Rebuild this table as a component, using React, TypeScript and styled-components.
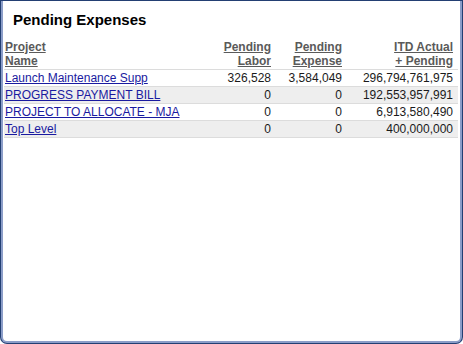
import React from 'react';
import styled, { createGlobalStyle } from 'styled-components';

const GlobalStyle = createGlobalStyle`
  html, body {
    margin: 0;
    padding: 0;
    background: #ffffff;
  }
  body {
    font-family: "Liberation Sans", Arial, sans-serif;
  }
`;

const Frame = styled.div`
  box-sizing: border-box;
  width: 463px;
  height: 344px;
  background: #233f73;
  padding: 1px;
  border-radius: 0 0 7px 7px;
  display: flex;
`;

const Panel = styled.div`
  box-sizing: border-box;
  flex: 1;
  min-width: 0;
  background: #ffffff;
  border: 2px solid #8b9dc8;
  border-top: none;
  border-radius: 0 0 6px 6px;
  display: flex;
  flex-direction: column;
  padding: 0 1px;
`;

const Title = styled.h1`
  margin: 0;
  padding: 10px 0 0 9px;
  height: 28px;
  font-size: 15px;
  font-weight: bold;
  color: #000000;
  line-height: 18px;
`;

const Table = styled.table`
  width: 454px;
  border-collapse: collapse;
  table-layout: fixed;
  font-size: 12px;
`;

const Col = styled.col<{ $width: number }>`
  width: ${(p) => p.$width}px;
`;

const HeadCell = styled.th<{ $align?: 'left' | 'right' }>`
  text-align: ${(p) => p.$align ?? 'right'};
  vertical-align: bottom;
  font-weight: bold;
  color: #5a5a5a;
  text-decoration: underline;
  line-height: 14px;
  padding: 1px ${(p) => (p.$align === 'left' ? 0 : 3)}px 1px 1px;
  white-space: nowrap;
  &:last-child {
    padding-right: 5px;
  }
`;

const Row = styled.tr<{ $shade: boolean }>`
  background: ${(p) => (p.$shade ? '#eeeeee' : '#ffffff')};
  border-top: 1px solid #dcdcdc;
  &:last-child {
    border-bottom: 1px solid #dcdcdc;
  }
`;

const Cell = styled.td<{ $align?: 'left' | 'right' }>`
  text-align: ${(p) => p.$align ?? 'right'};
  color: #1a1a1a;
  line-height: 14px;
  padding: 1px ${(p) => (p.$align === 'left' ? 0 : 3)}px 1px 1px;
  white-space: nowrap;
  overflow: hidden;
  &:last-child {
    padding-right: 5px;
  }
`;

const ProjectLink = styled.a`
  color: #1a1aa0;
  text-decoration: underline;
`;

const rows = [
  { name: 'Launch Maintenance Supp', labor: '326,528', expense: '3,584,049', itd: '296,794,761,975' },
  { name: 'PROGRESS PAYMENT BILL', labor: '0', expense: '0', itd: '192,553,957,991' },
  { name: 'PROJECT TO ALLOCATE - MJA', labor: '0', expense: '0', itd: '6,913,580,490' },
  { name: 'Top Level', labor: '0', expense: '0', itd: '400,000,000' },
];

const App: React.FC = () => {
  return (
    <>
      <GlobalStyle />
      <Frame>
        <Panel>
          <Title>Pending Expenses</Title>
          <Table>
            <colgroup>
              <Col $width={211} />
              <Col $width={59} />
              <Col $width={71} />
              <Col $width={113} />
            </colgroup>
            <thead>
              <tr>
                <HeadCell $align="left">
                  Project
                  <br />
                  Name
                </HeadCell>
                <HeadCell>
                  Pending
                  <br />
                  Labor
                </HeadCell>
                <HeadCell>
                  Pending
                  <br />
                  Expense
                </HeadCell>
                <HeadCell>
                  ITD Actual
                  <br />+ Pending
                </HeadCell>
              </tr>
            </thead>
            <tbody>
              {rows.map((r, i) => (
                <Row key={r.name} $shade={i % 2 === 1}>
                  <Cell $align="left">
                    <ProjectLink href="#">{r.name}</ProjectLink>
                  </Cell>
                  <Cell>{r.labor}</Cell>
                  <Cell>{r.expense}</Cell>
                  <Cell>{r.itd}</Cell>
                </Row>
              ))}
            </tbody>
          </Table>
        </Panel>
      </Frame>
    </>
  );
};

export default App;
